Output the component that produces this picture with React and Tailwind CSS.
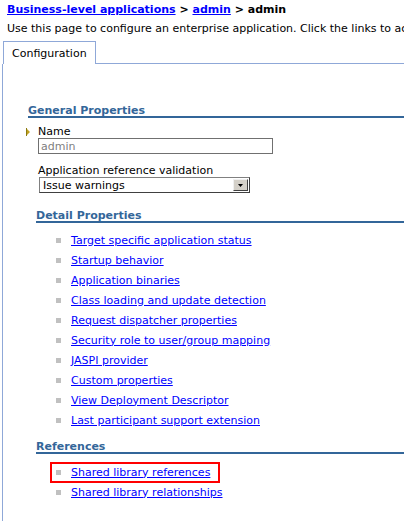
import React from 'react';

const details = [
    'Target specific application status',
    'Startup behavior',
    'Application binaries',
    'Class loading and update detection',
    'Request dispatcher properties',
    'Security role to user/group mapping',
    'JASPI provider',
    'Custom properties',
    'View Deployment Descriptor',
    'Last participant support extension',
];

const LinkRow = ({ label, boxed }) => (
    <div className="flex h-[20px] items-center">
        <div className={`flex h-[21px] items-center ${boxed ? 'ml-[-6px] border-2 border-[#ff0000] pl-[4px] pr-[8px]' : ''}`}>
            <span className="mr-[10px] h-[5px] w-[5px] bg-[#c0c0c0]"></span>
            <a href="#" className="text-[#0000ff] underline">{label}</a>
        </div>
    </div>
);

const Section = ({ title, className = '' }) => (
    <div className={`border-b-2 border-[#336699] font-bold leading-[11px] text-[#336699] ${className}`}>{title}</div>
);

const App = () => {
    return (
        <div className="h-[521px] w-[404px] overflow-hidden bg-white text-[11px] leading-[13px] text-black" style={{ fontFamily: '"DejaVu Sans", Verdana, sans-serif' }}>
            <div className="whitespace-nowrap pl-[7px] pt-[3px] font-bold">
                <a href="#" className="text-[#0000ff] underline">Business-level applications</a>
                {' > '}
                <a href="#" className="text-[#0000ff] underline">admin</a>
                {' > admin'}
            </div>
            <div className="mt-[6px] whitespace-nowrap pl-[7px]">
                Use this page to configure an enterprise application. Click the links to access pages for further configuring.
            </div>

            <div className="mt-[6px] flex pl-[3px]">
                <div className="h-[23px] border-l border-r border-t border-[#8fa8d8] px-[8px] pt-[5px]">Configuration</div>
                <div className="flex-1 border-b border-[#8fa8d8]"></div>
            </div>

            <div className="ml-[2px] h-[460px] border-l border-[#8fa8d8] pt-[41px]">
                <Section title="General Properties" className="ml-[25px]" />

                <div className="ml-[23px] mt-[7px] flex items-center">
                    <svg width="5" height="8" viewBox="0 0 5 8" className="mr-[7px]">
                        <rect x="0" y="0" width="1" height="8" fill="#8b7a10" />
                        <path d="M1 1 L4 4 L1 7 Z" fill="#c0a020" />
                    </svg>
                    <span>Name</span>
                </div>
                <div className="ml-[35px] flex h-[16px] w-[235px] items-center border border-[#707070] pl-[2px] text-[#808080]">admin</div>

                <div className="ml-[35px] mt-[10px]">Application reference validation</div>
                <div className="ml-[36px] flex h-[16px] w-[211px] items-center border border-[#404040] border-l-[#808080] border-t-[#808080]">
                    <span className="flex-1 pl-[3px]">Issue warnings</span>
                    <span className="m-[1px] flex h-[12px] w-[15px] items-center justify-center border border-[#f0f0f0] border-b-[#404040] border-r-[#404040] bg-[#d4d0c8]">
                        <svg width="5" height="3" viewBox="0 0 5 3"><path d="M0 0 L5 0 L2.5 3 Z" fill="#000" /></svg>
                    </span>
                </div>

                <Section title="Detail Properties" className="ml-[33px] mt-[17px]" />
                <div className="ml-[53px] mt-[7px]">
                    {details.map((d) => (
                        <LinkRow key={d} label={d} />
                    ))}
                </div>

                <Section title="References" className="ml-[33px] mt-[11px]" />
                <div className="ml-[53px] mt-[8px]">
                    <LinkRow label="Shared library references" boxed />
                    <LinkRow label="Shared library relationships" />
                </div>
            </div>
        </div>
    );
};

export default App;
